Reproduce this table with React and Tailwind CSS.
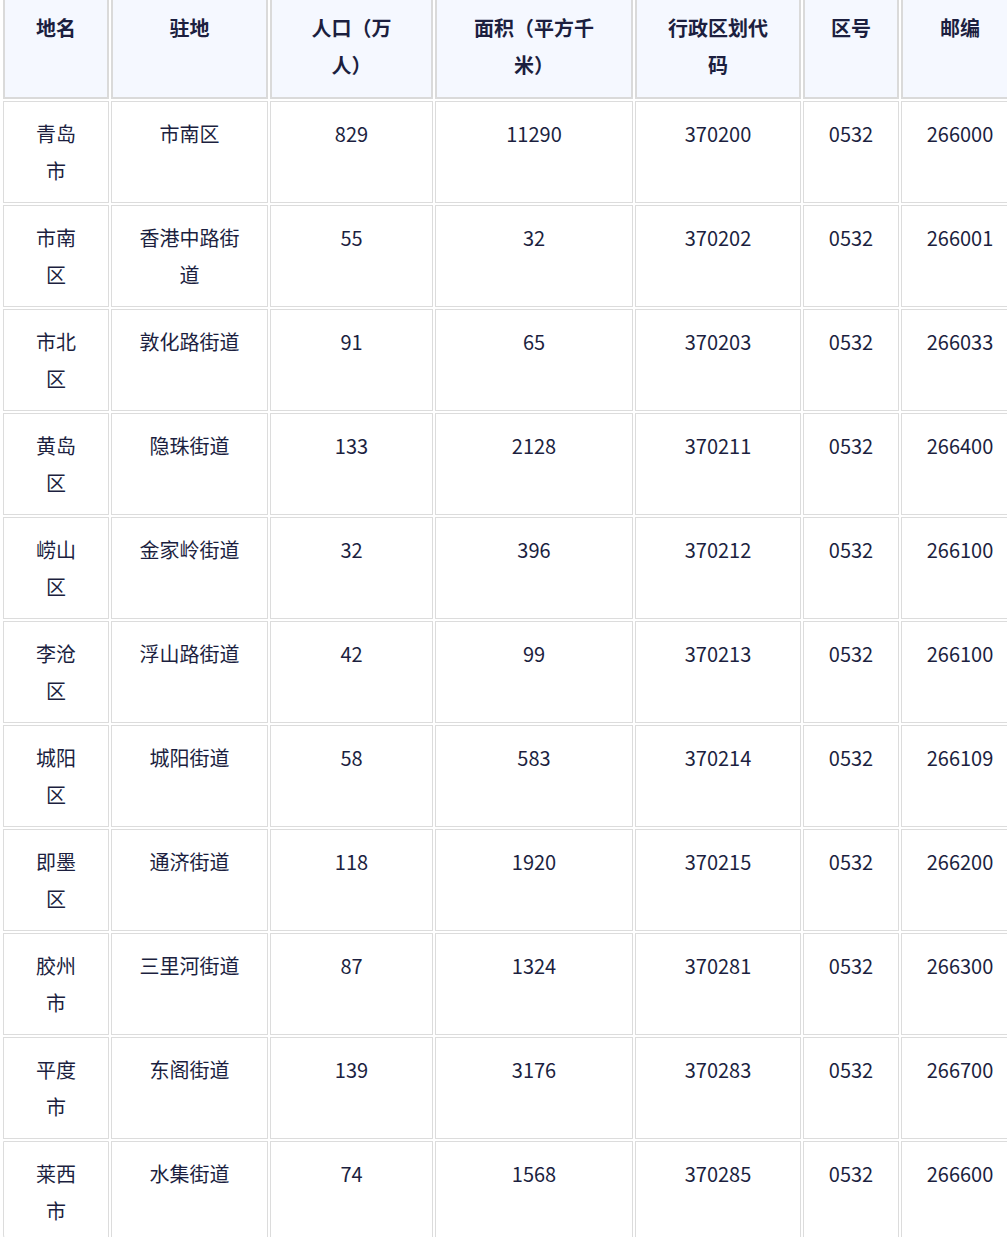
const headers = [
  { label: '地名', w: 'w-[106px] px-[22px]' },
  { label: '驻地', w: 'w-[157px] px-[22px]' },
  { label: '人口（万人）', w: 'w-[163px] px-[28px]' },
  { label: '面积（平方千米）', w: 'w-[198px] px-[24px]' },
  { label: '行政区划代码', w: 'w-[166px] px-[24px]' },
  { label: '区号', w: 'w-[96px] px-[22px]' },
  { label: '邮编', w: 'w-[118px] px-[22px]' },
];

const rows = [
  ['青岛市', '市南区', '829', '11290', '370200', '0532', '266000'],
  ['市南区', '香港中路街道', '55', '32', '370202', '0532', '266001'],
  ['市北区', '敦化路街道', '91', '65', '370203', '0532', '266033'],
  ['黄岛区', '隐珠街道', '133', '2128', '370211', '0532', '266400'],
  ['崂山区', '金家岭街道', '32', '396', '370212', '0532', '266100'],
  ['李沧区', '浮山路街道', '42', '99', '370213', '0532', '266100'],
  ['城阳区', '城阳街道', '58', '583', '370214', '0532', '266109'],
  ['即墨区', '通济街道', '118', '1920', '370215', '0532', '266200'],
  ['胶州市', '三里河街道', '87', '1324', '370281', '0532', '266300'],
  ['平度市', '东阁街道', '139', '3176', '370283', '0532', '266700'],
  ['莱西市', '水集街道', '74', '1568', '370285', '0532', '266600'],
];

export default function App() {
  return (
    <div className="w-[1007px] h-[1237px] overflow-hidden bg-white font-['Noto_Sans_CJK_SC','Noto_Sans',sans-serif] text-[20px] leading-[37px] text-[#1c1f3f]">
      <table className="table-fixed border-separate border-spacing-[2px] w-[1020px] -mt-[10px] ml-px">
        <thead>
          <tr>
            {headers.map((h, i) => (
              <th
                key={h.label}
                className={`${h.w} align-top text-center font-bold pt-[15px] pb-[14px] bg-[#f5f8ff] border-2 border-[#dadada] ${i === 0 ? 'rounded-tl-lg' : ''}`}
              >
                {h.label}
              </th>
            ))}
          </tr>
        </thead>
        <tbody>
          {rows.map((row, r) => (
            <tr key={r}>
              {row.map((cell, c) => (
                <td
                  key={c}
                  className={`align-top text-center px-[24px] pt-[13px] pb-[13px] h-[102px] border border-[#dcdcdc] ${r === rows.length - 1 && c === 0 ? 'rounded-bl-lg' : ''}`}
                >
                  {cell}
                </td>
              ))}
            </tr>
          ))}
        </tbody>
      </table>
    </div>
  );
}
